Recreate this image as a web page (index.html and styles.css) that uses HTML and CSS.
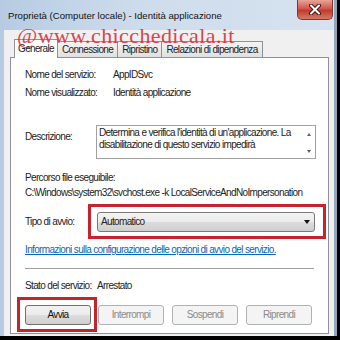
FILE: index.html
```html
<!DOCTYPE html>
<html lang="it">
<head>
    <meta charset="UTF-8">
    <title>Proprietà - Identità applicazione</title>
    <link rel="stylesheet" href="styles.css">
</head>
<body>
    <div class="window">
        <!-- Title bar -->
        <div class="titlebar">
            <span class="title">Proprietà (Computer locale) - Identità applicazione</span>
            <div class="close">
                <svg width="14" height="11" viewBox="0 0 14 11">
                    <path d="M3 1.5 L11 9.5 M11 1.5 L3 9.5" stroke="#4a1616" stroke-width="4" stroke-linecap="round"/>
                    <path d="M3 1.5 L11 9.5 M11 1.5 L3 9.5" stroke="#fff" stroke-width="2" stroke-linecap="round"/>
                </svg>
            </div>
        </div>

        <div class="client">
            <div class="watermark">@www.chicchedicala.it</div>

            <!-- Tabs -->
            <div class="tabs">
                <div class="tab active">Generale</div>
                <div class="tab">Connessione</div>
                <div class="tab">Ripristino</div>
                <div class="tab">Relazioni di dipendenza</div>
            </div>

            <div class="panel">
                <div class="row name-row">
                    <span class="label name-label">Nome del servizio:</span>
                    <span>AppIDSvc</span>
                </div>
                <div class="row name-row second">
                    <span class="label name-label">Nome visualizzato:</span>
                    <span>Identità applicazione</span>
                </div>

                <div class="row desc-row">
                    <span class="label desc-label">Descrizione:</span>
                    <div class="desc-box">
                        <div class="desc-text">Determina e verifica l'identità di un'applicazione. La disabilitazione di questo servizio impedirà</div>
                        <div class="scroll">
                            <span class="scroll-up"></span>
                            <span class="scroll-down"></span>
                        </div>
                    </div>
                </div>

                <div class="path-title">Percorso file eseguibile:</div>
                <div class="path">C:\Windows\system32\svchost.exe -k LocalServiceAndNoImpersonation</div>

                <div class="row startup-row">
                    <span class="label startup-label">Tipo di avvio:</span>
                    <div class="highlight select-highlight">
                        <div class="select">
                            <span>Automatico</span>
                            <span class="select-arrow"></span>
                        </div>
                    </div>
                </div>

                <a class="link" href="#">Informazioni sulla configurazione delle opzioni di avvio del servizio.</a>

                <div class="separator"></div>

                <div class="row status-row">
                    <span class="label status-label">Stato del servizio:</span>
                    <span>Arrestato</span>
                </div>

                <div class="buttons">
                    <div class="highlight button-highlight">
                        <div class="btn">Avvia</div>
                    </div>
                    <div class="btn disabled">Interrompi</div>
                    <div class="btn disabled">Sospendi</div>
                    <div class="btn disabled">Riprendi</div>
                </div>
            </div>
        </div>
    </div>
</body>
</html>
```

FILE: styles.css
```css
body {
    margin: 0;
    background: #000;
    font-family: "Liberation Sans", Arial, sans-serif;
    font-size: 10px;
    letter-spacing: -0.65px;
    color: #222;
}
.window {
    width: 337px;
    height: 336px;
    display: flex;
    flex-direction: column;
    background: linear-gradient(90deg, #b6cbe2 0%, #cddcec 40%, #d6e2ef 100%);
    border-right: 3px solid #8fa6c0;
    box-sizing: border-box;
    overflow: hidden;
}

/* Title bar */
.titlebar {
    flex-shrink: 0;
    height: 30px;
    display: flex;
    justify-content: space-between;
    align-items: flex-start;
    padding: 0 1px 0 8px;
}
.title {
    margin-top: 10px;
    font-size: 9.6px;
    letter-spacing: 0;
    color: #111;
}
.close {
    width: 36px;
    height: 20px;
    display: flex;
    align-items: center;
    justify-content: center;
    background: linear-gradient(#e8a497 0%, #d2574a 45%, #c23a2c 55%, #d47a66 100%);
    border: 1px solid #7a3a34;
    border-top: none;
    border-radius: 0 0 5px 5px;
    box-sizing: border-box;
}

/* Client area */
.client {
    position: relative;
    flex: 1;
    min-height: 0;
    margin-left: 4px;
    padding: 9px 5px 2px 6px;
    background: #f0f0f0;
    display: flex;
    flex-direction: column;
}
.watermark {
    position: absolute;
    left: 13px;
    top: -5px;
    font-family: "Liberation Serif", "Times New Roman", serif;
    font-size: 22px;
    line-height: 22px;
    letter-spacing: 0.4px;
    color: #d8323c;
    opacity: 0.9;
    z-index: 2;
}

/* Tabs */
.tabs {
    flex-shrink: 0;
    display: flex;
    align-items: flex-end;
    margin-left: 4px;
    height: 18px;
}
.tab {
    height: 16px;
    line-height: 15px;
    padding: 0 4px;
    border: 1px solid #8e9199;
    border-bottom: none;
    border-left: none;
    background: linear-gradient(#f4f4f4, #e0e0e0);
    box-sizing: border-box;
    white-space: nowrap;
}
.tab.active {
    height: 19px;
    margin-bottom: -1px;
    padding: 0 3px;
    border-left: 1px solid #8e9199;
    background: #fff;
    position: relative;
    z-index: 1;
    line-height: 17px;
}

.panel {
    flex: 1;
    min-width: 0;
    background: #fff;
    border: 1px solid #8e9199;
    padding: 0 13px 0 14px;
    display: flex;
    flex-direction: column;
    overflow: hidden;
}
.row {
    flex-shrink: 0;
    display: flex;
    align-items: center;
    line-height: 12px;
    white-space: nowrap;
}
.label { flex-shrink: 0; }
.name-row { margin-top: 11px; }
.name-row.second { margin-top: 6px; }
.name-label { width: 88px; }

.desc-row {
    margin-top: 26px;
    align-items: flex-start;
}
.desc-label {
    width: 71px;
    margin-top: 6px;
}
.desc-box {
    flex: 1;
    height: 34px;
    margin-right: -1px;
    border: 1px solid #a0a0a0;
    box-sizing: border-box;
    display: flex;
    white-space: normal;
    overflow: hidden;
}
.desc-text {
    flex: 1;
    padding: 1px 2px;
    line-height: 11.5px;
}
.scroll {
    width: 13px;
    display: flex;
    flex-direction: column;
    align-items: center;
    justify-content: space-between;
    padding: 7px 0 5px;
}
.scroll-up,
.scroll-down {
    width: 0;
    height: 0;
    border-left: 2.5px solid transparent;
    border-right: 2.5px solid transparent;
}
.scroll-up { border-bottom: 3px solid #606060; }
.scroll-down { border-top: 3px solid #606060; }

.path-title {
    margin-top: 13px;
    line-height: 12px;
}
.path {
    margin-top: 3px;
    line-height: 12px;
    white-space: nowrap;
}

/* Red highlight frames */
.highlight {
    border: 3px solid #c8232c;
    box-sizing: border-box;
}

.startup-row { margin-top: 5px; }
.startup-label { width: 63px; }
.select-highlight {
    flex: 1;
    height: 35px;
    margin-right: -11px;
    padding: 5px 8px 0 6px;
}
.select {
    height: 20px;
    display: flex;
    align-items: center;
    justify-content: space-between;
    padding: 0 4px 0 3px;
    border: 1px solid #7a7a7a;
    border-radius: 3px;
    background: linear-gradient(#f3f3f3 0%, #ebebeb 50%, #dcdcdc 51%, #cfcfcf 100%);
    box-sizing: border-box;
}
.select-arrow {
    width: 0;
    height: 0;
    border-left: 3.5px solid transparent;
    border-right: 3.5px solid transparent;
    border-top: 4px solid #111;
}

.link {
    flex-shrink: 0;
    margin-top: 5px;
    line-height: 12px;
    color: #0a66b8;
    text-decoration: underline;
    white-space: nowrap;
}
.separator {
    flex-shrink: 0;
    margin-top: 12px;
    margin-right: 1px;
    height: 1px;
    background: #a0a0a0;
}

.status-row { margin-top: 11px; }
.status-label { width: 72px; }

/* Buttons */
.buttons {
    flex-shrink: 0;
    display: flex;
    align-items: flex-start;
    gap: 8px;
    margin-top: 5px;
}
.button-highlight {
    height: 35px;
    margin: 0 -7px 0 -8px;
    padding: 5px 3px 0 5px;
}
.btn {
    width: 66px;
    height: 20px;
    line-height: 18px;
    text-align: center;
    border: 1px solid #707070;
    border-radius: 3px;
    background: linear-gradient(#f2f2f2 0%, #ebebeb 50%, #dddddd 51%, #cfcfcf 100%);
    box-sizing: border-box;
    color: #111;
}
.btn.disabled {
    margin-top: 8px;
    border-color: #adb2b5;
    background: #f4f4f4;
    color: #8a8a8a;
}
```
